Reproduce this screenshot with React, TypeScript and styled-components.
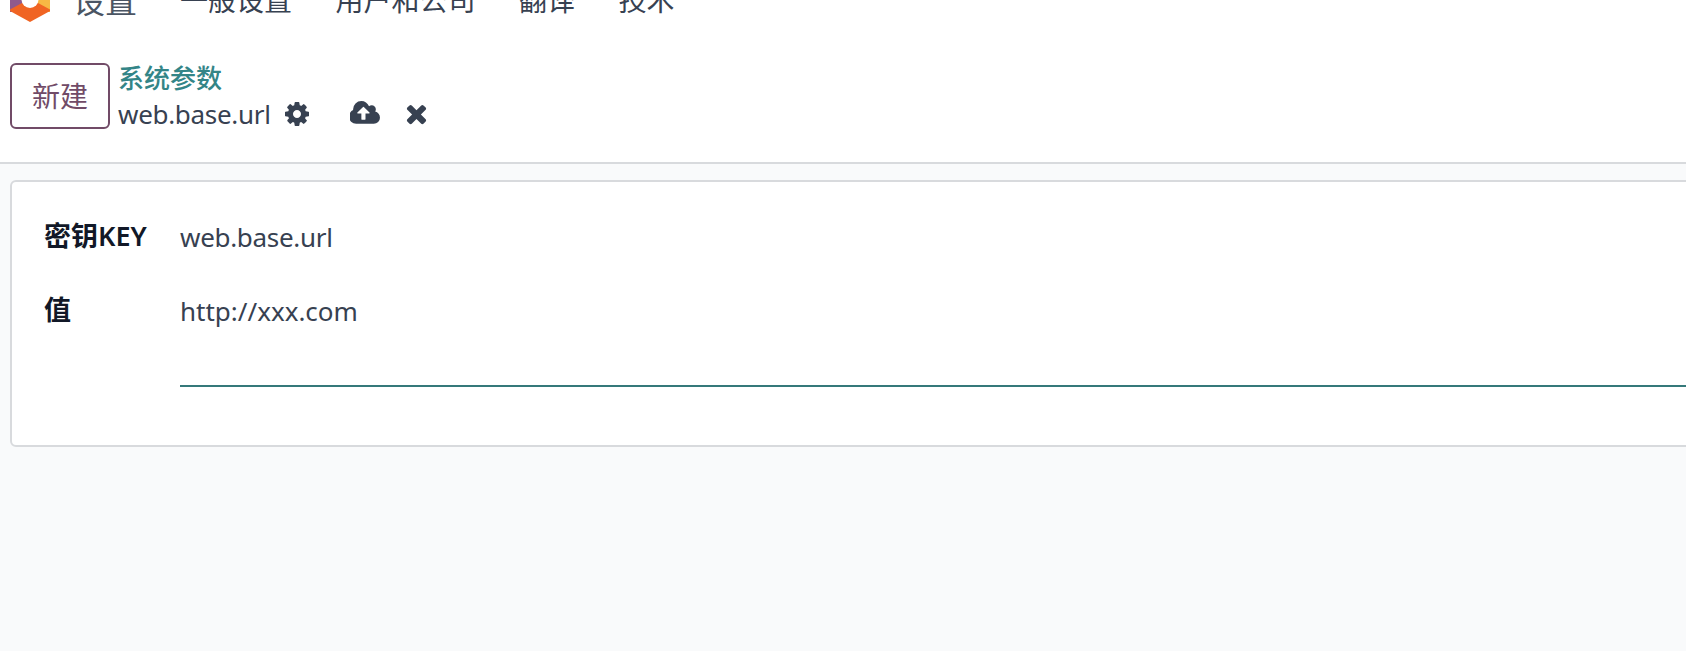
import { FC } from 'react';
import styled, { createGlobalStyle } from 'styled-components';

const GlobalStyle = createGlobalStyle`
  html, body {
    margin: 0;
    padding: 0;
    height: 100%;
    overflow: hidden;
    background: #f9fafb;
  }
  body {
    font-family: "Noto Sans", "Noto Sans CJK SC", sans-serif;
    color: #374151;
  }
`;

const NAV_ITEMS = ['一般设置', '用户和公司', '翻译', '技术'];

const COG_PATH =
  'M1152 896q0-106-75-181t-181-75-181 75-75 181 75 181 181 75 181-75 75-181zm512-109v222q0 12-8 23t-20 13l-185 28q-19 54-39 91 35 50 107 138 10 12 10 25t-9 23q-27 37-99 108t-94 71q-12 0-26-9l-138-108q-44 23-91 38-16 136-29 186-7 28-36 28h-222q-14 0-24.500-8.500t-11.500-21.500l-28-184q-49-16-90-37l-141 107q-10 9-25 9-14 0-25-11-126-114-165-168-7-10-7-23 0-12 8-23 15-21 51-66.500t54-70.500q-27-50-41-99l-183-27q-13-2-21-12.500t-8-23.500v-222q0-12 8-23t19-13l186-28q14-46 39-92-40-57-107-138-10-12-10-24 0-10 9-23 26-36 98.500-107.500t94.500-71.500q13 0 26 10l138 107q44-23 91-38 16-136 29-186 7-28 36-28h222q14 0 24.500 8.500t11.500 21.500l28 184q49 16 90 37l142-107q9-9 24-9 13 0 25 10 129 119 165 170 7 8 7 22 0 12-8 23-15 21-51 66.500t-54 70.500q26 50 41 98l183 28q13 2 22 12.500t9 23.500z';
const CLOUD_PATH =
  'M1216 864q0-14-9-23l-352-352q-9-9-23-9t-23 9l-351 351q-10 12-10 24 0 14 9 23t23 9h224v352q0 13 9.500 22.500t22.500 9.500h192q13 0 22.500-9.500t9.500-22.500v-352h224q13 0 22.500-9.500t9.500-22.500zm640 288q0 159-112.500 271.500t-271.500 112.500h-1088q-185 0-316.500-131.500t-131.500-316.500q0-130 70-240t188-165q-2-30-2-43 0-212 150-362t362-150q156 0 285.500 87t188.500 231q71-62 166-62 106 0 181 75t75 181q0 76-41 138 130 31 213.500 135.500t83.500 238.500z';
const TIMES_PATH =
  'M1298 1322q0 40-28 68l-136 136q-28 28-68 28t-68-28l-294-294-294 294q-28 28-68 28t-68-28l-136-136q-28-28-28-68t28-68l294-294-294-294q-28-28-28-68t28-68l136-136q28-28 68-28t68 28l294 294 294-294q28-28 68-28t68 28l136 136q28 28 28 68t-28 68l-294 294 294 294q28 28 28 68z';

const Logo: FC = () => (
  <LogoSvg viewBox="0 0 40 22" aria-hidden="true">
    <path d="M0 0 H20 V12 H0 Z" fill="#8f5a8c" />
    <path d="M40 0 H20 V12 H40 Z" fill="#f7b844" />
    <path d="M0 9.500 L12 3 H28 L40 9.500 V11 L20 22 L0 11 Z" fill="#f06423" />
    <circle cx="20" cy="-0.5" r="8.500" fill="#fff" />
  </LogoSvg>
);

export default function App() {
  return (
    <Page>
      <GlobalStyle />
      <Header>
        <NavBar>
          <Logo />
          <AppName>设置</AppName>
          <NavMenu>
            {NAV_ITEMS.map((item) => (
              <NavItem key={item}>{item}</NavItem>
            ))}
          </NavMenu>
        </NavBar>
        <ControlPanel>
          <NewButton>新建</NewButton>
          <Breadcrumb>
            <ParentLink>系统参数</ParentLink>
            <CurrentRow>
              <CurrentName>web.base.url</CurrentName>
              <GearIcon viewBox="0 0 1792 1792">
                <path d={COG_PATH} />
              </GearIcon>
              <CloudIcon viewBox="0 0 1920 1792">
                <path d={CLOUD_PATH} />
              </CloudIcon>
              <CloseIcon viewBox="0 0 1408 1792">
                <path d={TIMES_PATH} />
              </CloseIcon>
            </CurrentRow>
          </Breadcrumb>
        </ControlPanel>
      </Header>
      <Sheet>
        <Field>
          <Label>密钥KEY</Label>
          <Value $tight>web.base.url</Value>
        </Field>
        <Field>
          <Label>值</Label>
          <TextValue>http://xxx.com</TextValue>
        </Field>
      </Sheet>
    </Page>
  );
}

const Page = styled.div`
  width: 1686px;
  height: 651px;
  overflow: hidden;
`;

const Header = styled.header`
  height: 162px;
  background: #fff;
  border-bottom: 2px solid #d8dadd;
  overflow: hidden;
`;

const NavBar = styled.nav`
  display: flex;
  align-items: center;
  height: 46px;
  margin-top: -24px;
  padding-left: 10px;
`;

const LogoSvg = styled.svg`
  width: 40px;
  height: 22px;
  align-self: flex-end;
  fill: none;
`;

const AppName = styled.span`
  font-size: 32px;
  color: #4b5563;
  margin-left: 23px;
`;

const NavMenu = styled.div`
  display: flex;
  gap: 43.5px;
  margin-left: 43px;
`;

const NavItem = styled.span`
  font-size: 28px;
  color: #374151;
`;

const ControlPanel = styled.div`
  display: flex;
  align-items: flex-start;
  gap: 8px;
  margin-top: 41px;
  padding-left: 10px;
`;

const NewButton = styled.button`
  width: 100px;
  height: 66px;
  box-sizing: border-box;
  background: #fff;
  border: 2px solid #714b67;
  border-radius: 6px;
  color: #714b67;
  font-family: inherit;
  font-size: 28px;
  padding: 0 0 3px;
`;

const Breadcrumb = styled.div`
  display: flex;
  flex-direction: column;
`;

const ParentLink = styled.a`
  font-size: 26px;
  line-height: 30px;
  color: #338587;
  font-weight: 500;
`;

const CurrentRow = styled.div`
  display: flex;
  align-items: center;
  height: 41px;
  fill: #374151;
`;

const CurrentName = styled.span`
  font-size: 26px;
  letter-spacing: -0.3px;
  color: #374151;
`;

const GearIcon = styled.svg`
  width: 28px;
  height: 28px;
  margin-left: 12px;
`;

const CloudIcon = styled.svg`
  width: 31px;
  height: 29px;
  margin-left: 39px;
`;

const CloseIcon = styled.svg`
  width: 23px;
  height: 29px;
  margin-left: 24px;
`;

const Sheet = styled.section`
  box-sizing: border-box;
  width: 1800px;
  height: 267px;
  margin: 16px 0 0 10px;
  padding: 35px 32px 0;
  background: #fff;
  border: 2px solid #d8dadd;
  border-radius: 6px;
`;

const Field = styled.div`
  display: grid;
  grid-template-columns: 136px 1fr;
  align-items: start;
`;

const Label = styled.div`
  font-size: 27px;
  line-height: 37px;
  font-weight: 600;
  color: #111827;
`;

const Value = styled.div<{ $tight?: boolean }>`
  font-size: 26px;
  line-height: 40px;
  height: 74px;
  letter-spacing: ${({ $tight }) => ($tight ? '-0.3px' : '0')};
  color: #374151;
`;

const TextValue = styled(Value)`
  height: 94px;
  border-bottom: 2px solid #35797a;
`;
